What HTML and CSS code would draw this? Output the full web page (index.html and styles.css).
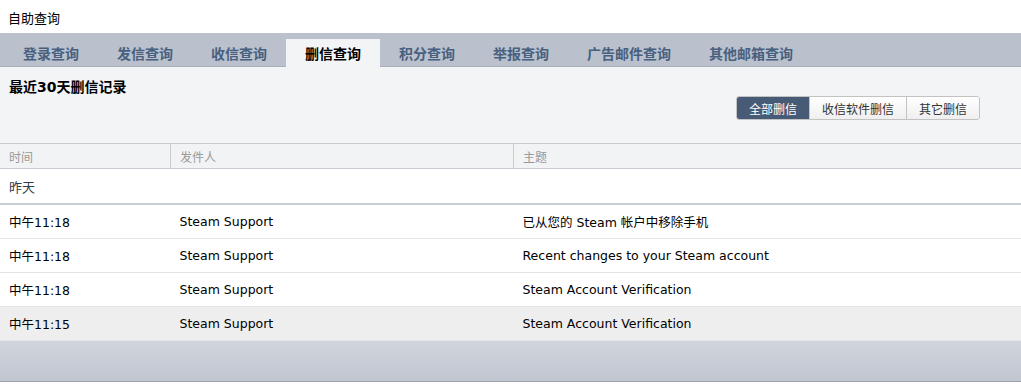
FILE: index.html
```html
<!DOCTYPE html>
<html lang="zh-CN">
  <head>
    <meta charset="UTF-8" />
    <title>自助查询</title>
    <link rel="stylesheet" href="styles.css">
  </head>
  <body>
    <h1 class="page-title">自助查询</h1>
    <nav class="tabs">
      <a href="#">登录查询</a>
      <a href="#">发信查询</a>
      <a href="#">收信查询</a>
      <a class="active" href="#">删信查询</a>
      <a href="#">积分查询</a>
      <a href="#">举报查询</a>
      <a href="#">广告邮件查询</a>
      <a href="#">其他邮箱查询</a>
    </nav>
    <div class="panel">
      <h2>最近30天删信记录</h2>
      <div class="filter">
        <button class="on">全部删信</button>
        <button>收信软件删信</button>
        <button>其它删信</button>
      </div>
    </div>
    <table class="list">
      <thead>
        <tr>
          <th class="c-time">时间</th>
          <th class="c-from">发件人</th>
          <th>主题</th>
        </tr>
      </thead>
      <tbody>
        <tr class="group"><td colspan="3">昨天</td></tr>
        <tr>
          <td>中午11:18</td>
          <td>Steam Support</td>
          <td>已从您的 Steam 帐户中移除手机</td>
        </tr>
        <tr>
          <td>中午11:18</td>
          <td>Steam Support</td>
          <td>Recent changes to your Steam account</td>
        </tr>
        <tr>
          <td>中午11:18</td>
          <td>Steam Support</td>
          <td>Steam Account Verification</td>
        </tr>
        <tr class="hover">
          <td>中午11:15</td>
          <td>Steam Support</td>
          <td>Steam Account Verification</td>
        </tr>
      </tbody>
    </table>
    <div class="footer"></div>
  </body>
</html>
```

FILE: styles.css
```css
body {
  margin: 0;
  padding: 0;
  background-color: #fff;
  color: #000;
  font-family: 'DejaVu Sans', 'Noto Sans CJK SC', sans-serif;
  font-size: 12px;
}

.page-title {
  margin: 0;
  height: 33px;
  padding-left: 8px;
  line-height: 36px;
  font-size: 13px;
  font-weight: normal;
  font-family: 'Noto Sans CJK SC', sans-serif;
}

/* 頁籤 */
.tabs {
  display: flex;
  height: 33px;
  padding-left: 4px;
  background-color: #bac0cc;
  border-bottom: 1px solid #a8afbd;
}

.tabs a {
  margin-top: 6px;
  padding: 0 19px;
  height: 28px;
  line-height: 28px;
  color: #48607f;
  font-family: 'Noto Sans CJK SC', sans-serif;
  font-size: 14px;
  font-weight: 700;
  text-decoration: none;
}

.tabs a.active {
  background-color: #f3f4f6;
  color: #000;
  height: 29px;
  margin-bottom: -1px;
}

.panel {
  height: 76px;
  background-color: #f3f4f6;
  display: flex;
  flex-direction: column;
  padding: 0 41px 0 9px;
}

.panel h2 {
  margin: 0;
  padding-top: 10px;
  font-size: 14px;
  line-height: 20px;
  font-family: 'DejaVu Sans', 'Noto Sans CJK SC', sans-serif;
}

.filter {
  align-self: flex-end;
  display: flex;
  margin-top: -1px;
  border: 1px solid #c2c2c2;
  border-radius: 3px;
  overflow: hidden;
}

.filter button {
  height: 22px;
  padding: 0 12px;
  border: none;
  border-left: 1px solid #c2c2c2;
  background: linear-gradient(#ffffff, #efefef);
  color: #333;
  font-family: 'Noto Sans CJK SC', sans-serif;
  font-size: 12px;
}

.filter button:first-child {
  border-left: none;
}

.filter button.on {
  background: #475b77;
  color: #fff;
}

/* 列表 */
.list {
  width: 100%;
  border-collapse: collapse;
  table-layout: fixed;
  font-size: 12.5px;
}

.list th {
  height: 24px;
  padding: 0 9px;
  text-align: left;
  font-size: 12px;
  font-weight: normal;
  color: #999;
  background-color: #f2f3f5;
  border-top: 1px solid #c8ccd2;
  border-bottom: 1px solid #c8ccd2;
  border-left: 1px solid #c8ccd2;
}

.list th:first-child {
  border-left: none;
}

.list .c-time {
  width: 152px;
}

.list .c-from {
  width: 324px;
}

.list td {
  height: 33px;
  padding: 0 9px;
  border-bottom: 1px solid #e1e3e8;
  white-space: nowrap;
}

.list tr.group td {
  height: 34px;
  font-size: 13px;
  color: #2e3a4c;
  border-bottom: 2px solid #c8ccd6;
}

.list tr.hover td {
  background-color: #eeeeee;
}

.footer {
  height: 40px;
  background: linear-gradient(#d1d5dd, #c0c5cf);
  border-bottom: 1px solid #9da3ae;
}
```
